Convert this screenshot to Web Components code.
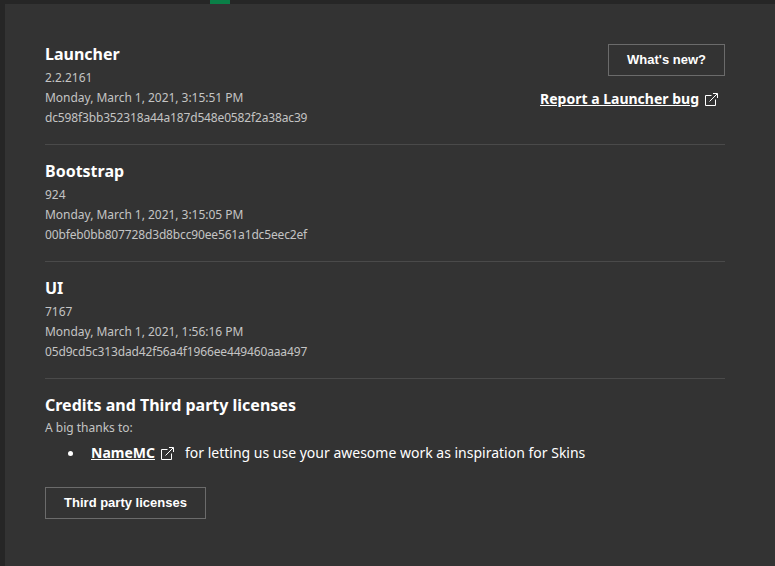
<!DOCTYPE html>
<html><head><meta charset="utf-8">
<style>
html,body{margin:0;padding:0;height:100%;background:#262626;overflow:hidden}
body{font-family:"Noto Sans",sans-serif;color:#fff}
</style></head><body>
<template id="ext-tpl"><style>:host{display:inline-block;width:13px;height:13px;line-height:0}svg{display:block}</style>
<svg width="13" height="13" viewBox="0 0 13 13" fill="none" stroke="#fff" stroke-width="1"><path d="M6.5 2.5H.5V12.5H10.5V6.5"/><path d="M4.5 8.5 12.2.8"/><path d="M8 .5H12.5V5"/></svg></template>

<mc-page>
  <mc-section heading="Launcher" a="2.2.2161" b="Monday, March 1, 2021, 3:15:51 PM" c="dc598f3bb352318a44a187d548e0582f2a38ac39">
    <mc-button slot="aside">What's new?</mc-button>
    <mc-link slot="aside">Report a Launcher bug</mc-link>
  </mc-section>
  <mc-section heading="Bootstrap" a="924" b="Monday, March 1, 2021, 3:15:05 PM" c="00bfeb0bb807728d3d8bcc90ee561a1dc5eec2ef"></mc-section>
  <mc-section heading="UI" a="7167" b="Monday, March 1, 2021, 1:56:16 PM" c="05d9cd5c313dad42f56a4f1966ee449460aaa497"></mc-section>
  <mc-credits>
    <mc-link slot="name" small>NameMC</mc-link>
    <mc-button slot="action" wide>Third party licenses</mc-button>
  </mc-credits>
</mc-page>

<script>
class McExt extends HTMLElement{constructor(){super();this.attachShadow({mode:'open'}).append(document.getElementById('ext-tpl').content.cloneNode(true));}}
customElements.define('mc-ext',McExt);

class McPage extends HTMLElement{constructor(){super();this.attachShadow({mode:'open'}).innerHTML=`<style>
:host{display:block;position:relative;height:566px;box-sizing:border-box;padding-top:4px;background:#262626}
.tab{position:absolute;left:210px;top:0;width:20px;height:4px;background:#0a7f47}
.main{margin-left:5px;height:562px;box-sizing:border-box;background:#333;padding:24px 50px 0 40px}
</style><div class="tab"></div><div class="main"><slot></slot></div>`;}}
customElements.define('mc-page',McPage);

class McSection extends HTMLElement{constructor(){super();this.attachShadow({mode:'open'}).innerHTML=`<style>
:host{display:flex;justify-content:space-between;height:117px;box-sizing:border-box;padding-top:15px;border-bottom:1px solid #4a4a4a}
h2{margin:0 0 3px;font:700 16px/22px "Noto Sans",sans-serif;color:#fff}
.l{font:400 12px/20px "Noto Sans",sans-serif;color:#c4c4c4;letter-spacing:-.03px}
.c{letter-spacing:-.15px}
.aside{display:flex;flex-direction:column;align-items:flex-end;padding-top:1px}
</style><div><h2></h2><div class="l a"></div><div class="l b"></div><div class="l c"></div></div><div class="aside"><slot name="aside"></slot></div>`;
const s=this.shadowRoot;s.querySelector('h2').textContent=this.getAttribute('heading');
for(const k of 'abc')s.querySelector('.'+k).textContent=this.getAttribute(k);}}
customElements.define('mc-section',McSection);

class McButton extends HTMLElement{constructor(){super();this.attachShadow({mode:'open'}).innerHTML=`<style>
:host{display:inline-flex;align-items:center;justify-content:center;box-sizing:border-box;width:117px;height:32px;padding-bottom:2px;border:1px solid #6b6b6b;font:700 13px/1 "Liberation Sans",Arial,sans-serif;color:#fff}
:host([wide]){width:161px}
</style><slot></slot>`;}}
customElements.define('mc-button',McButton);

class McLink extends HTMLElement{constructor(){super();this.attachShadow({mode:'open'}).innerHTML=`<style>
:host{display:inline-flex;align-items:center;gap:6px;margin-top:12px;margin-right:7px;font:700 14px/22px "Noto Sans",sans-serif;color:#fff}
:host([small]){margin:0}
span{text-decoration:underline}
</style><span><slot></slot></span><mc-ext></mc-ext>`;}}
customElements.define('mc-link',McLink);

class McCredits extends HTMLElement{constructor(){super();this.attachShadow({mode:'open'}).innerHTML=`<style>
:host{display:block;padding-top:15px}
h2{margin:0 0 4px;font:700 16px/22px "Noto Sans",sans-serif;color:#fff}
.t{font:400 12px/16px "Noto Sans",sans-serif;color:#c4c4c4}
.row{display:flex;align-items:center;margin-top:5px;padding-left:23px;font:400 14px/24px "Noto Sans",sans-serif;color:#fff}
.dot{width:5px;height:5px;border-radius:50%;background:#fff;margin-right:18px}
.txt{margin-left:11px}
.act{margin-top:22px;display:flex}
</style><h2>Credits and Third party licenses</h2><div class="t">A big thanks to:</div>
<div class="row"><i class="dot"></i><slot name="name"></slot><span class="txt">for letting us use your awesome work as inspiration for Skins</span></div>
<div class="act"><slot name="action"></slot></div>`;}}
customElements.define('mc-credits',McCredits);
</script>
</body></html>
